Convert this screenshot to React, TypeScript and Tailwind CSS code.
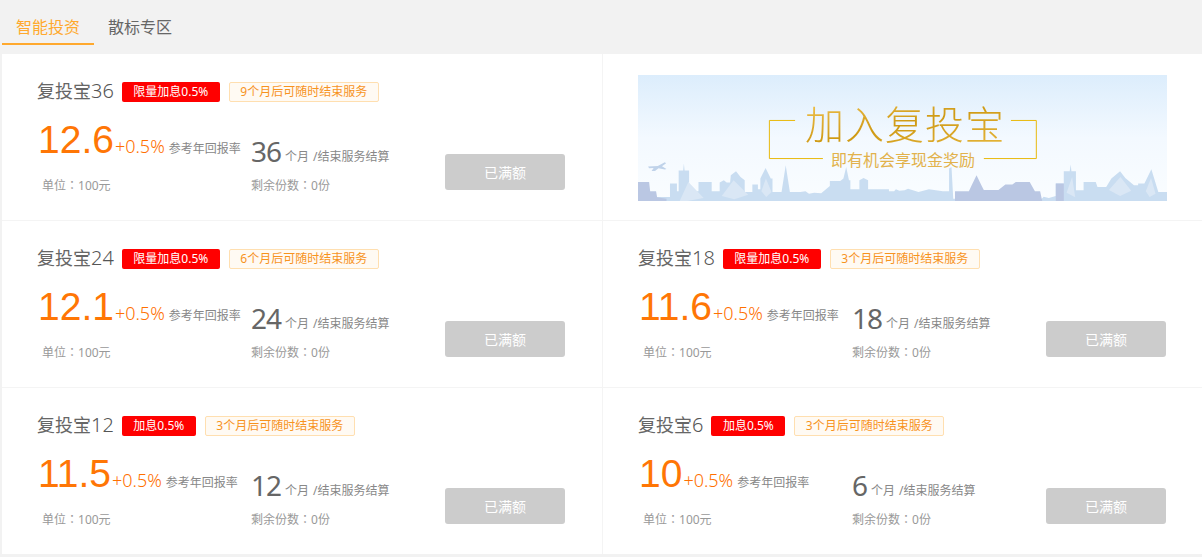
const sans = { fontFamily: '"Noto Sans", "Noto Sans CJK SC", sans-serif' };
const tc = { fontFamily: '"Noto Sans CJK TC", sans-serif' };

type P = { name: string; num: string; badge: string; tag: string; rate: string; term: string };

function Cell({ p, right }: { p: P; right?: boolean }) {
  return (
    <div className={`h-[166px] pt-[28px] pl-[35px] ${right ? "pr-[36px]" : "pr-[37px] border-r border-[#f4f4f4]"}`}>
      <div className="flex items-center h-[20px]">
        <span className="pb-[2px] text-[18px] leading-[20px] text-[#666]">
          {p.name}
          <span className="text-[20px] font-light text-[#555]">{p.num}</span>
        </span>
        <span className="ml-[8px] h-[20px] px-[11.5px] rounded-[2px] bg-[#ff0000] text-white text-[12px] leading-[20px]">{p.badge}</span>
        <span className="ml-[9px] h-[20px] px-[10.5px] rounded-[2px] bg-[#fffaf3] border border-[#ffdfb0] text-[#f7931e] text-[12px] leading-[18px]">{p.tag}</span>
      </div>
      <div className="flex items-start mt-[14px]">
        <div className="w-[214px] shrink-0">
          <div className="flex items-baseline h-[48px] whitespace-nowrap pl-px">
            <span className="text-[39px] leading-[48px] text-[#ff7605]" style={{ fontFamily: '"Liberation Sans", sans-serif' }}>{p.rate}</span>
            <span className="ml-[1px] text-[18px] font-light text-[#ff7000]">+0.5%</span>
            <span className="ml-[4px] text-[12px] text-[#888]">参考年回报率</span>
          </div>
          <div className="mt-[12px] pl-[5px] text-[12px] leading-[18px] text-[#999]">单位<span style={tc}>：</span>100元</div>
        </div>
        <div className="flex-1">
          <div className="flex items-baseline h-[48px] pt-[13px] whitespace-nowrap">
            <span className="text-[28px] leading-[44px] tracking-[-1px] text-[#666]">{p.term}</span>
            <span className="ml-[4px] -translate-y-px text-[12px] text-[#888]">个月</span>
            <span className="ml-[4px] -translate-y-px text-[12px] text-[#888]">/结束服务结算</span>
          </div>
          <div className="mt-[12px] text-[12px] leading-[18px] text-[#999]">剩余份数<span style={tc}>：</span>0份</div>
        </div>
        <button className="mt-[38px] w-[120px] h-[36px] shrink-0 rounded-[3px] bg-[#ccc] text-white text-[14px]">已满额</button>
      </div>
    </div>
  );
}

function Banner() {
  return (
    <div className="relative w-[529px] h-[126px] overflow-hidden bg-gradient-to-b from-[#dcedfc] via-[#f3f9ff] to-[#fafdff]">
      <svg className="absolute inset-0 w-full h-full" viewBox="23 30 1522 377" preserveAspectRatio="none">
        <path fill="#c9ddf1" d="M23 407V395H115V355H135V378H140V316H153L155 295L157 316H170V378H197V350H235V378H258V352L270 345L278 352H288L290 330L305 318L318 335L330 345V380H352V358H368V372H375V340L390 308L405 340H410V380H436L448 300L460 380H490L505 378L515 385L530 382L550 384L575 362V347H605L614 340L622 305L630 345H634V372H660V345L672 338L685 345V372H745V378H760L765 372L775 376L790 375L800 370L830 380L860 372L900 378H918V310L925 305L930 400H1185L1190 394L1205 398L1225 392V355H1248V318H1265L1268 298L1270 318H1283V375H1305V350H1340L1345 365H1370L1385 340L1410 318L1425 338L1450 360H1462V355H1480L1500 312L1520 380H1545V407Z" />
        <path fill="#bac7e3" d="M23 407V350H55L58 378H75L78 396L105 400V407ZM935 407V378H975L982 362L997 330L1012 362L1018 374H1060L1080 358H1100L1110 350H1150L1165 378H1180L1186 407ZM1225 407V355H1248V407Z" />
        <path fill="#dae7f5" d="M143 407L168 350L212 398L165 407ZM264 392L298 345L340 388L300 402ZM378 378L391 340L407 380L392 395ZM1256 382L1272 335L1281 396ZM1378 374L1411 335L1442 376L1410 392ZM1484 378L1499 338L1512 385L1495 395Z" />
        <path fill="#c0d3ea" d="M52 304L80 302L100 291L104 294L92 303L105 311L100 313L82 309L72 317L62 317L68 308L55 309Z" />
        <path fill="none" stroke="#e8b90e" vectorEffect="non-scaling-stroke" style={{ strokeWidth: 1 }} d="M475 166H401V280H555M1096 166H1169V280H1018" />
      </svg>
      <div className="absolute left-[167px] top-[27px] text-[39px] leading-[44px] font-light whitespace-nowrap tracking-[1px] bg-gradient-to-br from-[#f0c24a] via-[#cf9a12] to-[#e6b63a] bg-clip-text text-transparent">
        加入复投宝
      </div>
      <div className="absolute left-[193px] top-[75px] text-[16px] leading-[20px] whitespace-nowrap text-[#e2b24c]">即有机会享现金奖励</div>
    </div>
  );
}

const rows: P[] = [
  { name: "复投宝", num: "24", badge: "限量加息0.5%", tag: "6个月后可随时结束服务", rate: "12.1", term: "24" },
  { name: "复投宝", num: "18", badge: "限量加息0.5%", tag: "3个月后可随时结束服务", rate: "11.6", term: "18" },
  { name: "复投宝", num: "12", badge: "加息0.5%", tag: "3个月后可随时结束服务", rate: "11.5", term: "12" },
  { name: "复投宝", num: "6", badge: "加息0.5%", tag: "3个月后可随时结束服务", rate: "10", term: "6" },
];

export default function App() {
  return (
    <div className="w-[1202px] h-[557px] bg-[#f2f2f2] overflow-hidden" style={sans}>
      <div className="h-[54px] pl-[2px] flex items-start pt-[11px]">
        <div className="w-[92px] h-[34px] text-center text-[16px] leading-[32px] text-[#ffa92e] border-b-2 border-[#ffa92e]">智能投资</div>
        <div className="ml-[14px] text-[16px] leading-[32px] text-[#666]">散标专区</div>
      </div>
      <div className="ml-[2px] bg-white">
        <div className="grid grid-cols-[601px_599px] border-b border-[#f4f4f4]">
          <Cell p={{ name: "复投宝", num: "36", badge: "限量加息0.5%", tag: "9个月后可随时结束服务", rate: "12.6", term: "36" }} />
          <div className="pt-[21px] pl-[35px]"><Banner /></div>
        </div>
        <div className="grid grid-cols-[601px_599px] border-b border-[#f4f4f4]">
          <Cell p={rows[0]} />
          <Cell p={rows[1]} right />
        </div>
        <div className="grid grid-cols-[601px_599px]">
          <Cell p={rows[2]} />
          <Cell p={rows[3]} right />
        </div>
      </div>
    </div>
  );
}
